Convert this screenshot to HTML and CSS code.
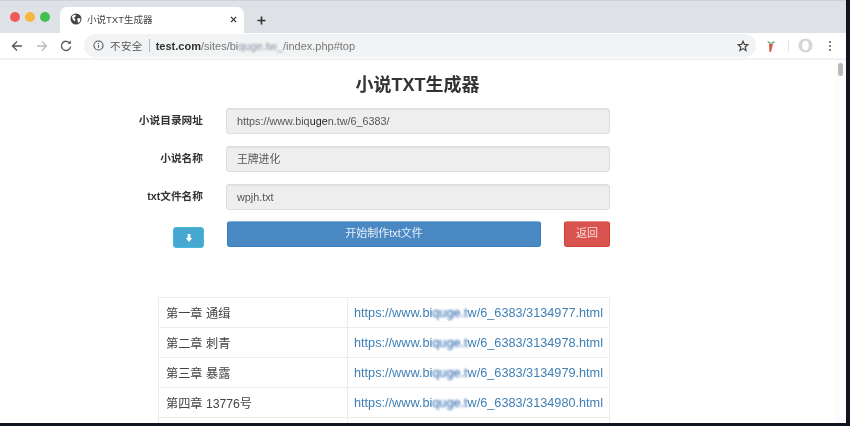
FILE: index.html
```html
<!DOCTYPE html>
<html lang="zh">
<head>
<meta charset="utf-8">
<title>小说TXT生成器</title>
<link rel="stylesheet" href="styles.css">
</head>
<body>
<div class="window">
  <div class="tabbar">
    <div class="lights"><i class="red"></i><i class="yellow"></i><i class="green"></i></div>
    <div class="tab">
      <svg class="globe" viewBox="0 0 12 12"><circle cx="6" cy="6" r="5.5" fill="#444"/><path d="M2 3l3-1.500 1 1.500-2 1.500 1.500 2-1 2L2.500 6zM7.500 5l3 .5-.5 3-2 1.500-.5-2.500z" fill="#fff"/></svg>
      <span class="tab-title">小说TXT生成器</span>
      <svg class="tab-close" viewBox="0 0 8 8"><path d="M1 1l6 6M7 1L1 7" stroke="#333" stroke-width="1.500"/></svg>
    </div>
    <svg class="new-tab" viewBox="0 0 10 10"><path d="M5 .5v9M.5 5h9" stroke="#333" stroke-width="1.800"/></svg>
  </div>
  <div class="toolbar">
    <svg class="nav" viewBox="0 0 12 12"><path d="M11 6H2M6 1.500L1.500 6 6 10.500" fill="none" stroke="#555" stroke-width="1.300"/></svg>
    <svg class="nav" viewBox="0 0 12 12"><path d="M1 6h9M6 1.500L10.500 6 6 10.500" fill="none" stroke="#bbb" stroke-width="1.300"/></svg>
    <svg class="nav reload" viewBox="0 0 12 12"><path d="M10 3.500A4.600 4.600 0 1 0 10.600 6.500" fill="none" stroke="#555" stroke-width="1.300"/><path d="M7.500 3.800h3.300V.6z" fill="#555"/></svg>
    <div class="omnibox">
      <svg class="info" viewBox="0 0 12 12"><circle cx="6" cy="6" r="5" fill="none" stroke="#555" stroke-width="1.100"/><path d="M6 5.500v3M6 3.200v1.200" stroke="#555" stroke-width="1.100"/></svg>
      <span class="insecure">不安全</span>
      <span class="divider"></span>
      <span class="url"><b>test.com</b>/sites/bi<span class="smear">quge.tw_</span>/index.php#top</span>
      <svg class="star" viewBox="0 0 12 12"><path d="M6 1.200l1.400 3.200 3.500.3-2.700 2.300.8 3.400L6 8.600l-3 1.800.8-3.400L1.100 4.700l3.500-.3z" fill="none" stroke="#444" stroke-width="1.200"/></svg>
    </div>
    <svg class="ext" viewBox="0 0 10 14"><path d="M1 2l3 1 1 2-2-.5z" fill="#5aa469"/><path d="M9 2L6 3 5 5l3-1z" fill="#5aa469"/><path d="M3 5h4L5 13H3.500z" fill="#d9574a"/></svg>
    <span class="tool-sep"></span>
    <svg class="avatar" viewBox="0 0 16 16"><circle cx="8" cy="8" r="7.500" fill="#d4d6d9"/><ellipse cx="8" cy="8" rx="3.500" ry="5" fill="#fff"/></svg>
    <svg class="menu" viewBox="0 0 4 12"><circle cx="2" cy="2" r="1" fill="#555"/><circle cx="2" cy="6" r="1" fill="#555"/><circle cx="2" cy="10" r="1" fill="#555"/></svg>
  </div>
  <div class="viewport">
    <main class="page">
      <h1 class="title">小说TXT生成器</h1>
      <form class="form">
        <div class="row"><label class="label">小说目录网址</label><div class="field">https://www.biq<span class="smear-dark">uge</span>n.tw/6_6383/</div></div>
        <div class="row"><label class="label">小说名称</label><div class="field">王牌进化</div></div>
        <div class="row"><label class="label">txt文件名称</label><div class="field">wpjh.txt</div></div>
        <div class="row actions">
          <div class="label-slot">
            <button type="button" class="btn btn-info"><svg class="down" viewBox="0 0 10 12"><path d="M3.200 1h3.600v5H9L5 11 1 6h2.200z" fill="#fff"/></svg></button>
          </div>
          <button type="button" class="btn btn-primary">开始制作txt文件</button>
          <button type="button" class="btn btn-danger">返回</button>
        </div>
      </form>
      <table class="chapters">
        <tr><td class="name">第一章 通缉</td><td><a class="link">https://www.bi<span class="smear-link">quge.t</span>w/6_6383/3134977.html</a></td></tr>
        <tr><td class="name">第二章 刺青</td><td><a class="link">https://www.bi<span class="smear-link">quge.t</span>w/6_6383/3134978.html</a></td></tr>
        <tr><td class="name">第三章 暴露</td><td><a class="link">https://www.bi<span class="smear-link">quge.t</span>w/6_6383/3134979.html</a></td></tr>
        <tr><td class="name">第四章 13776号</td><td><a class="link">https://www.bi<span class="smear-link">quge.t</span>w/6_6383/3134980.html</a></td></tr>
        <tr><td class="name">&nbsp;</td><td>&nbsp;</td></tr>
      </table>
    </main>
    <div class="scrollbar"><span class="thumb"></span></div>
  </div>
</div>
</body>
</html>
```

FILE: styles.css
```css
* { box-sizing: border-box; }
html, body { margin: 0; height: 100%; background: #10151f; overflow: hidden; }
body { font-family: "Liberation Sans", "Noto Sans CJK SC", sans-serif; color: #333; }

.window {
  width: 846px;
  height: 423px;
  display: flex;
  flex-direction: column;
  background: #fff;
  overflow: hidden;
  filter: blur(0.6px);
}

.tabbar {
  height: 33px;
  flex: none;
  background: #dee1e6;
  border-top: 1px solid #cfd1d6;
  display: flex;
  align-items: flex-end;
  padding-left: 10px;
}
.lights { display: flex; gap: 5px; align-self: flex-start; padding-top: 11px; width: 50px; }
.lights i { width: 10px; height: 10px; border-radius: 50%; display: block; }
.red { background: #ee5a5a; }
.yellow { background: #f5b83f; }
.green { background: #3fc04f; }

.tab {
  width: 184px;
  height: 26px;
  background: #fff;
  border-radius: 7px 7px 0 0;
  display: flex;
  align-items: center;
  padding: 0 7px 2px 10px;
}
.globe { width: 12px; height: 12px; flex: none; }
.tab-title { font-size: 9.500px; color: #444; margin-left: 5px; flex: 1; white-space: nowrap; }
.tab-close { width: 7px; height: 7px; flex: none; }
.new-tab { width: 9px; height: 9px; margin: 0 0 8px 13px; flex: none; }

.toolbar {
  height: 27px;
  flex: none;
  background: #fff;
  display: flex;
  align-items: center;
  padding: 0 15px 0 11px;
  border-bottom: 2px solid #f0f1f3;
}
.nav { width: 12px; height: 12px; margin-right: 13px; flex: none; }
.reload { margin-left: -1px; }
.omnibox {
  width: 672px;
  height: 23px;
  flex: none;
  background: #f1f3f4;
  border-radius: 12px;
  display: flex;
  align-items: center;
  padding: 0 7px 0 9px;
  margin-left: -1px;
  margin-right: 10px;
}
.info { width: 11px; height: 11px; flex: none; }
.insecure { font-size: 10.500px; color: #555; margin-left: 6px; letter-spacing: .4px; white-space: nowrap; }
.divider { width: 1px; height: 13px; background: #b5b7ba; margin: 0 6px; flex: none; }
.url { font-size: 11px; color: #777; flex: 1; white-space: nowrap; }
.url b { color: #333; }
.smear { color: #8890a0; filter: blur(1.2px); display: inline-block; }
.star { width: 12px; height: 12px; flex: none; }
.ext { width: 10px; height: 14px; flex: none; }
.tool-sep { width: 1px; height: 12px; background: #e4e5e7; margin: 0 9px 0 12px; flex: none; }
.avatar { width: 15px; height: 15px; flex: none; }
.menu { width: 4px; height: 12px; margin-left: 15px; flex: none; }

.viewport { flex: 1; min-height: 0; display: flex; background: #fff; }
.page { flex: 1; min-width: 0; overflow: hidden; padding-top: 14px; }
.scrollbar { width: 11px; flex: none; padding: 3px 3px 0 3px; background: #fcfcfc; }
.thumb { display: block; height: 13px; border-radius: 3px; background: #b9b9b9; }

.title {
  margin: 0 0 12px;
  text-align: center;
  font-size: 18px;
  line-height: 22px;
  font-weight: 700;
  color: #333;
}

.form { width: 610px; display: flex; flex-direction: column; gap: 12px; }
.row { display: flex; align-items: center; height: 26px; }
.label {
  width: 203px;
  flex: none;
  text-align: right;
  font-size: 10.700px;
  line-height: 12px;
  padding-bottom: 2px;
  font-weight: 700;
  color: #333;
}
.field {
  margin-left: 23px;
  width: 384px;
  height: 26px;
  line-height: 24px;
  padding-left: 10px;
  font-size: 10.800px;
  color: #555;
  background: #eee;
  border: 1px solid #ddd;
  border-radius: 3px;
  box-shadow: inset 0 1px 1px rgba(0,0,0,.06);
}
.smear-dark { color: #222; filter: blur(.7px); display: inline-block; }

.actions { margin-top: -1px; }
.label-slot { width: 204px; flex: none; display: flex; justify-content: flex-end; align-self: flex-start; padding-top: 6px; }
.btn { border: 1px solid transparent; border-radius: 3px; padding: 0 0 3px; color: #fff; font: inherit; font-size: 11px; line-height: 12px; display: flex; align-items: center; justify-content: center; }
.btn-info { width: 31px; height: 21px; padding: 0; background: #46a8d0; border-color: #46b8da; }
.down { width: 8px; height: 10px; }
.btn-primary { width: 315px; height: 26px; margin-left: 23px; background: #4a88c4; border-color: #357ebd; border-top-color: #7fb2da; color: #e6eef7; }
.btn-danger { width: 46px; height: 26px; margin-left: 23px; background: #d9534f; border-color: #d43f3a; border-top-color: #e98a86; color: #f8dede; }

.chapters {
  border-collapse: collapse;
  margin: 50px 0 0 158px;
  width: 452px;
  table-layout: fixed;
  background: #fff;
}
.chapters td {
  border: 1px solid #ececec;
  height: 30px;
  padding: 0 0 0 7px;
  font-size: 12px;
  color: #444;
  white-space: nowrap;
  overflow: hidden;
}
.chapters td + td { padding-left: 6px; }
.chapters .name { width: 189px; font-size: 12.200px; }
.link { color: #3f7fb5; font-size: 12.700px; }
.smear-link { display: inline-block; filter: blur(1.2px); color: #1f5fa8; }
```
